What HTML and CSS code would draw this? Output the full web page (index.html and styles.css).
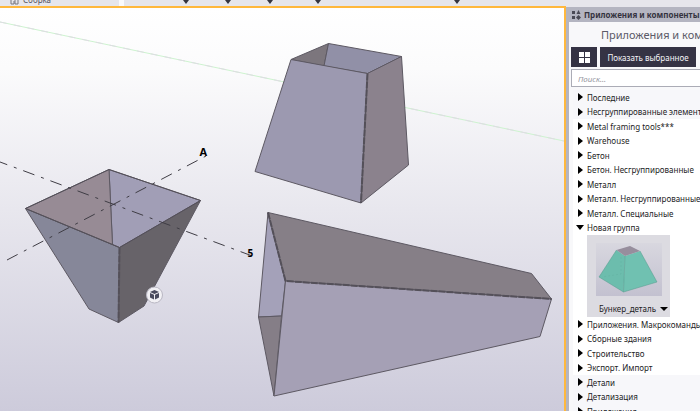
FILE: index.html
```
<!DOCTYPE html>
<html lang="ru">
<head>
  <meta charset="UTF-8" />
  <meta name="viewport" content="width=device-width, initial-scale=1.0" />
  <title>Приложения и компоненты</title>
  <link rel="stylesheet" href="styles.css">
</head>
<body>

  <div class="toolbar">
    <div class="tool-group tool-group-main">
      <svg class="tool-icon" viewBox="0 0 9 8"><path d="M1 0v7h3V4M5 3v4h3V0" fill="none" stroke="#77767f" /></svg>
      <span>Сборка</span>
    </div>
    <div class="tool-group tool-group-menus">
      <button class="tool-menu tool-first" aria-label="Вид"></button>
      <button class="tool-menu" aria-label="Плоскость"></button>
      <button class="tool-menu" aria-label="Привязка"></button>
      <button class="tool-menu tool-medium" aria-label="Выбор"></button>
      <button class="tool-menu tool-wide" aria-label="Фильтр"></button>
    </div>
  </div>

  <div class="workspace">
    <main class="scene">
      <svg class="model" viewBox="0 8 564 403" preserveAspectRatio="xMidYMid slice">
        <defs>
          <linearGradient id="sky" x1="0" y1="0" x2="0" y2="1">
            <stop offset="0" stop-color="#ffffff" />
            <stop offset="0.150" stop-color="#fbfbfc" />
            <stop offset="0.500" stop-color="#e8e7ee" />
            <stop offset="1" stop-color="#cdcbdb" />
          </linearGradient>
        </defs>
        <rect x="0" y="8" width="564" height="403" fill="url(#sky)" />
        <path class="guide" d="M0 22L564 141" />
        <path class="guide guide-gap" d="M0 22L564 141" />

        <!-- closed hopper, lower left -->
        <g class="solid">
          <path fill="#868799" d="M25.500 208.500L119.500 247.500L118.500 322.500L89 309Z" />
          <path fill="#676369" d="M119.500 247.500L200.500 200.500L144 306L118.500 322.500Z" />
          <path fill="#a19eb6" d="M109 169.500L200.500 200.500L119.500 247.500L112.500 244.500Z" />
          <path fill="#978b95" d="M25.500 208.500L109 169.500L112.500 244.500Z" />
          <path class="outline" d="M25.500 208.500L109 169.500L200.500 200.500L119.500 247.500Z" />
          <path class="edge" d="M119.500 247.500L118.500 322.500" />
        </g>

        <!-- grid axes -->
        <path class="axis" d="M-4 160.500L255 257" />
        <path class="axis" d="M7 260L206 156" />
        <text class="axis-name" x="199.500" y="156">A</text>
        <text class="axis-name axis-number" x="247.500" y="257">5</text>

        <!-- open hopper, top -->
        <g class="solid">
          <path fill="#7c767d" d="M291 59.500L328.500 43.500L324 66Z" />
          <path fill="#9190a7" d="M328.500 43.500L401.500 56.500L367.500 73.500L324 66Z" />
          <path fill="#9c99b0" d="M291 59.500L367.500 73.500L361 203L255 171.500Z" />
          <path fill="#8b828d" d="M367.500 73.500L401.500 56.500L408.500 165L361 203Z" />
          <path class="edge" d="M367.500 73.500L361 203" />
        </g>

        <!-- hopper on its side -->
        <g class="solid">
          <path fill="#a4a1b9" d="M268 212.500L285.500 281L281.500 316L258.500 317Z" />
          <path fill="#857e87" d="M258.500 317L281.500 316L274 396Z" />
          <path fill="#867f87" d="M268 212.500L531.500 273.500L551.500 299L285.500 281Z" />
          <path fill="#a5a0b5" d="M285.500 281L551.500 299L540 336.500L274 396Z" />
          <path class="edge" d="M268 212.500L285.500 281L551.500 299" />
        </g>

        <g transform="translate(154.500 295)">
          <circle r="8" fill="#f1f0f4" stroke="#b9b7c3" />
          <path fill="#4a4b5e" d="M0-5L4.500-3L0-1L-4.500-3ZM-4.500-2L-.5-.2V4.500L-4.500 2.500ZM4.500-2L.5-.2V4.500L4.500 2.500Z" />
        </g>
      </svg>
    </main>

    <aside class="panel">
      <div class="panel-bar">
        <svg class="panel-icon" viewBox="0 0 10 10" fill="#4a4a55">
          <rect x="1" y="1" width="3" height="3" /><path d="M7.500 0L9.500 4H5.500Z" />
          <rect x="1" y="6" width="3" height="3" /><path d="M7.500 5L10 7.500L7.500 10L5 7.500Z" />
        </svg>
        <span>Приложения и компоненты</span>
      </div>
      <h1>Приложения и компоненты</h1>
      <div class="actions">
        <button class="btn btn-grid" aria-label="Плитка">
          <svg viewBox="0 0 11 11" fill="#fff"><path d="M0 0h5v5H0zM6 0h5v5H6zM0 6h5v5H0zM6 6h5v5H6z" /></svg>
        </button>
        <button class="btn btn-show">Показать выбранное</button>
      </div>
      <input class="search" type="search" placeholder="Поиск..." aria-label="Поиск">

      <div class="tree">
        <div class="tree-group shaded">
          <button class="node">Последние</button>
          <button class="node">Несгруппированные элементы</button>
        </div>
        <div class="tree-group">
          <button class="node">Metal framing tools***</button>
          <button class="node">Warehouse</button>
          <button class="node">Бетон</button>
          <button class="node">Бетон. Несгруппированные</button>
          <button class="node">Металл</button>
          <button class="node">Металл. Несгруппированные</button>
          <button class="node">Металл. Специальные</button>
          <button class="node open">Новая группа</button>
        </div>
        <div class="component">
          <svg class="thumb" viewBox="0 0 66 53">
            <defs>
              <linearGradient id="thumbSky" x1="0" y1="0" x2="0" y2="1">
                <stop offset="0" stop-color="#d8d7df" />
                <stop offset="1" stop-color="#c3c1d0" />
              </linearGradient>
            </defs>
            <rect width="66" height="53" fill="url(#thumbSky)" />
            <path fill="#6cbdad" d="M20.500 7L29 13L27.500 49L3 34Z" />
            <path fill="#70c1b1" d="M29 13L44 8L61 39L27.500 49Z" />
            <path fill="#978e9d" d="M20.500 7L34 3L44 8L29 13Z" />
            <path fill="none" stroke="#559a8d" stroke-width="0.500" d="M20.500 7L3 34L27.500 49L61 39L44 8M29 13L27.500 49" />
            <path fill="none" stroke="#63b0a1" stroke-width="0.500" stroke-dasharray="2 2" d="M25 14V31L6 34" />
          </svg>
          <button class="component-name">Бункер_деталь</button>
        </div>
        <div class="tree-group">
          <button class="node">Приложения. Макрокоманды</button>
          <button class="node">Сборные здания</button>
          <button class="node">Строительство</button>
          <button class="node">Экспорт. Импорт</button>
        </div>
        <div class="tree-group shaded">
          <button class="node">Детали</button>
          <button class="node">Детализация</button>
          <button class="node">Приложения</button>
        </div>
      </div>
    </aside>
  </div>

</body>
</html>
```
FILE: styles.css
```
* {
  box-sizing: border-box;
}

body {
  margin: 0;
  height: 100vh;
  display: flex;
  flex-direction: column;
  overflow: hidden;
  font-family: "Noto Sans", "Open Sans", sans-serif;
  font-size: 8px;
  color: #1c1c24;
  background-color: #e6e6ec;
}

button {
  font: inherit;
  color: inherit;
  border: none;
  background: none;
  padding: 0;
  cursor: pointer;
}

/* top toolbar */
.toolbar {
  display: flex;
  gap: 5px;
  height: 6px;
  flex: none;
  background-color: #fafafc;
}

.tool-group {
  display: flex;
  align-items: flex-end;
  height: 6px;
  overflow: hidden;
  background-color: #e6e6ec;
}

.tool-group-main {
  width: 119px;
  gap: 4px;
  padding: 0 10px 1px;
  line-height: 10px;
  color: #55545e;
}

.tool-icon {
  width: 9px;
  height: 8px;
  flex: none;
}

.tool-group-menus {
  flex: 1;
  padding-bottom: 2px;
}

.tool-menu {
  display: flex;
  justify-content: flex-end;
  width: 42px;
}

.tool-menu::after {
  content: "";
  border: 3px solid transparent;
  border-top: 4px solid #34333f;
  border-bottom: none;
}

.tool-first {
  width: 65px;
}

.tool-medium {
  width: 48px;
}

.tool-wide {
  width: 139px;
}

/* model view */
.workspace {
  display: flex;
  flex: 1;
  min-height: 0;
}

.scene {
  flex: 1;
  min-width: 0;
  border-top: 2px solid #ffb83d;
  border-right: 2px solid #ffb83d;
}

.model {
  display: block;
  width: 100%;
  height: 100%;
}

.solid path {
  stroke: #5d5963;
  stroke-width: 1;
  stroke-linejoin: round;
}

.solid .outline,
.solid .edge {
  fill: none;
  stroke: #545059;
}

.solid .edge {
  stroke-width: 2;
  stroke-dasharray: 7 1;
}

.guide {
  stroke: #cdf3cf;
}

.guide-gap {
  stroke: #dedde3;
  stroke-dasharray: 7 7;
}

.axis {
  fill: none;
  stroke: #3f3d45;
  stroke-dasharray: 12 7 3 7;
}

.axis-name {
  font-family: "Noto Sans", sans-serif;
  font-size: 11px;
  font-weight: bold;
  fill: #000;
}

.axis-number {
  font-size: 10px;
}

/* side panel */
.panel {
  width: 134px;
  flex: none;
  overflow: hidden;
  margin-top: 1px;
  border-left: 3px solid #b4b5c1;
  background-color: #f8f8fa;
  white-space: nowrap;
}

.panel-bar {
  display: flex;
  align-items: center;
  gap: 3px;
  height: 15px;
  padding-left: 2px;
  font-weight: bold;
  color: #34333f;
  background-color: #b4b5c1;
}

.panel-icon {
  width: 10px;
  height: 10px;
  flex: none;
}

h1 {
  margin: 4px 0 3px 32px;
  font-size: 11px;
  font-weight: normal;
  line-height: 18px;
  color: #5c5b68;
}

.actions {
  display: flex;
  gap: 3px;
  padding-left: 2px;
}

.btn {
  display: flex;
  align-items: center;
  justify-content: center;
  height: 20px;
  color: #f4f4f8;
  background-color: #353344;
}

.btn-grid {
  width: 26px;
}

.btn-grid svg {
  width: 11px;
  height: 11px;
}

.btn-show {
  width: 96px;
}

.search {
  display: block;
  width: 100%;
  height: 18px;
  margin: 2px 0 3px 2px;
  padding: 0 6px;
  font: inherit;
  border: 1px solid #abacb6;
  border-radius: 0;
  background-color: #fff;
  outline: none;
}

.search::placeholder {
  font-style: italic;
  color: #9596a1;
}

/* component tree */
.tree {
  margin-left: 4px;
  background-color: #fff;
}

.shaded {
  background-color: #f7f7fa;
}

.node {
  display: flex;
  align-items: center;
  gap: 4px;
  width: 100%;
  height: 14px;
  padding-left: 5px;
}

.node:nth-child(even) {
  height: 15px;
}

.node::before {
  content: "";
  border: 4px solid transparent;
  border-left: 5px solid #000;
  border-right: none;
}

.node.open {
  gap: 3px;
  padding-left: 3px;
}

.node.open::before {
  border: 4px solid transparent;
  border-top: 5px solid #000;
  border-bottom: none;
}

.component {
  display: flex;
  flex-direction: column;
  align-items: center;
  gap: 6px;
  width: 83px;
  margin-left: 14px;
  padding: 8px 0 2px;
  background-color: #dcdbe1;
}

.thumb {
  width: 66px;
  height: 53px;
}

.component-name {
  display: flex;
  align-items: center;
  gap: 4px;
  padding-left: 10px;
  line-height: 13px;
}

.component-name::after {
  content: "";
  border: 4px solid transparent;
  border-top: 4px solid #000;
  border-bottom: none;
}
```
